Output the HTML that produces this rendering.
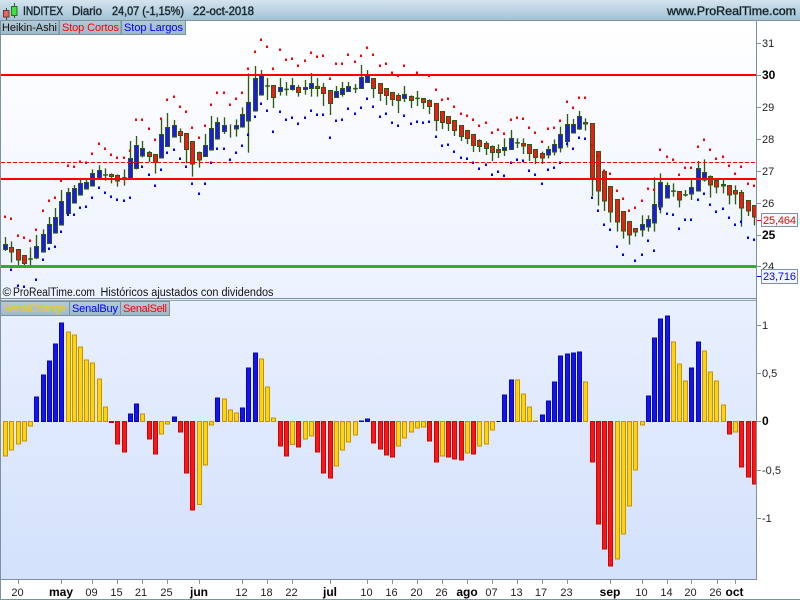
<!DOCTYPE html>
<html><head><meta charset="utf-8"><title>INDITEX</title>
<style>
html,body{margin:0;padding:0;background:#fff;width:800px;height:600px;overflow:hidden}
svg{display:block;font-family:"Liberation Sans",Arial,sans-serif;font-size:11px}
.w{fill:none;stroke:#2c5a12;stroke-width:4}
.d{fill:none;stroke:#2c5a12;stroke-width:4.5}
.cb{fill:#1a1aee;stroke:#2c5a12;stroke-width:3.2;shape-rendering:crispEdges}
.cr{fill:#f21a14;stroke:#2c5a12;stroke-width:3.2;shape-rendering:crispEdges}
.pr{fill:none;stroke:#f00;stroke-width:7}
.pb{fill:none;stroke:#00f;stroke-width:7}
.hy{fill:#ffd408;stroke:#c99200;stroke-width:3.3}
.hb{fill:#1414ee;stroke:#0808b0;stroke-width:3.3}
.hr{fill:#ff1414;stroke:#c80808;stroke-width:3.3}
.c{shape-rendering:crispEdges}
.hd{fill:#0c1a20;font-size:12px;paint-order:stroke;stroke:rgba(30,50,60,.4);stroke-width:1px}
.ax{fill:#222}
.b{font-weight:bold;fill:#000}
.m{text-anchor:middle}
</style></head><body>
<svg width="800" height="600" viewBox="0 0 800 600" xmlns="http://www.w3.org/2000/svg">
<defs>
<linearGradient id="h" x1="0" y1="0" x2="0" y2="1"><stop offset="0" stop-color="#d3e4ef"/><stop offset="1" stop-color="#a3c2d4"/></linearGradient>
<linearGradient id="l" x1="0" y1="0" x2="0" y2="1"><stop offset="0" stop-color="#b4cbd8"/><stop offset="1" stop-color="#9db9c8"/></linearGradient>
<linearGradient id="a" x1="0" y1="0" x2="0" y2="1"><stop offset="0" stop-color="#fff"/><stop offset="1" stop-color="#ecf2ff"/></linearGradient>
<linearGradient id="e" x1="0" y1="0" x2="0" y2="1"><stop offset="0" stop-color="#e9f0ff"/><stop offset="1" stop-color="#d3e1fb"/></linearGradient>
<clipPath id="k1"><rect x="1" y="21" width="755" height="277"/></clipPath>
<clipPath id="k2"><rect x="1" y="301" width="755" height="278"/></clipPath>
</defs>
<rect width="800" height="600" fill="#fff"/>
<rect width="800" height="20" fill="url(#h)"/>
<rect y="20" width="800" height="1" fill="#7c929e"/>
<rect x="1" y="21" width="755" height="277" fill="url(#a)"/>
<rect x="1" y="301" width="755" height="278" fill="url(#e)"/>
<rect y="298" width="756" height="1" fill="#7c929e"/>
<rect y="299" width="756" height="2" fill="#e4ebf2"/>
<rect y="300" width="756" height="1" fill="#8fa4b0"/>
<rect x="0" y="20" width="1" height="579" fill="#7c929e"/>
<rect x="756" y="20" width="1" height="560" fill="#7c929e"/>
<rect y="579" width="757" height="1" fill="#7c929e"/>
<rect y="599" width="800" height="1" fill="#7c929e"/>

<!-- logo -->
<g class="c">
<rect x="6" y="8" width="1" height="12" fill="#3a4a40"/><rect x="3.5" y="10.5" width="5.5" height="6.5" fill="#ef5f60" stroke="#6a3a3a"/>
<rect x="14" y="3" width="1" height="15" fill="#2f5a2f"/><rect x="11.5" y="6.5" width="5.5" height="9" fill="#3fe03f" stroke="#2a6a2a"/>
</g>
<text class="hd" x="23" y="15" textLength="40" lengthAdjust="spacingAndGlyphs">INDITEX</text>
<text class="hd" x="72" y="15" textLength="30" lengthAdjust="spacingAndGlyphs">Diario</text>
<text class="hd" x="112" y="15" textLength="72" lengthAdjust="spacingAndGlyphs">24,07 (-1,15%)</text>
<text class="hd" x="193" y="15" textLength="61" lengthAdjust="spacingAndGlyphs">22-oct-2018</text>
<text class="hd" x="667" y="15" textLength="129" lengthAdjust="spacingAndGlyphs">www.ProRealTime.com</text>

<g clip-path="url(#k1)">
<!-- Section A -->
<g transform="translate(.17,90) scale(.33333)">
<path class="w" d="M16 441V483M34 454V518M55 478V525M73 496V525M91 472V525M109 435V507M130 418V488M148 381V462M166 354V431M184 300V407M205 294V372M223 285V341M241 268V317M259 268V299M277 238V290M298 226V268M316 235V272M334 250V280M352 253V290M373 238V287M391 153V268"/>
<path class="cb" d="M10 464h12V478h-12zM103 470h12V504h-12zM124 434h12V486h-12zM142 404h12V460h-12zM160 383h12V429h-12zM178 335h12V405h-12zM199 308h12V370h-12zM217 296h12V339h-12zM235 281h12V315h-12zM253 278h12V297h-12zM271 251h12V288h-12zM292 242h12V264h-12zM385 206h12V267h-12z"/>
<path class="cr" d="M28 473h12V486h-12zM49 479h12V510h-12zM67 497h12V520h-12zM328 254h12V259h-12zM346 257h12V273h-12z"/>
<path class="d" d="M84 507h14M309 255h14M366 263.500h14"/>
<path class="pr c" d="M12 380h6M30 386h6M51 437h6M69 443h6M87 452h6M105 419h6M126 362h6M144 332h6M162 323h6M180 272h6M201 227h6M219 230h6M237 215h6M255 218h6M273 191h6M294 161h6M312 176h6M330 194h6M348 203h6M369 203h6M387 182h6"/>
<path class="pb c" d="M30 539h6M51 587h6M69 590h6M105 569h6M126 509h6M144 476h6M162 470h6M180 425h6M201 374h6M219 374h6M237 353h6M255 350h6M273 323h6M294 293h6M312 308h6M330 320h6M348 329h6M369 332h6M387 323h6"/>
</g>
<!-- Section B -->
<g transform="translate(135.17,30) scale(.33333)">
<path class="w" d="M4 318V418M22 333V382M43 363V396M61 373V431M79 265V385M97 249V350M118 270V323M136 295V338M154 310V400M172 333V440M193 365V413M211 312V380M229 258V362M247 262V329M268 262V312M286 283V323M304 268V320M322 232V293M340 130V368M361 108V245M379 120V197M397 144V210"/>
<path class="cb" d="M-2 347h12V415h-12zM16 356h12V378h-12zM73 314h12V384h-12zM91 293h12V349h-12zM112 287h12V321h-12zM205 347h12V379h-12zM223 296h12V360h-12zM241 278h12V327h-12zM262 287h12V304h-12zM298 287h12V297h-12zM316 254h12V291h-12zM334 218h12V273h-12zM355 146h12V243h-12zM373 135h12V195h-12z"/>
<path class="cr" d="M37 368h12V379h-12zM55 374h12V397h-12zM130 305h12V316h-12zM148 311h12V358h-12zM166 335h12V402h-12zM187 368h12V390h-12z"/>
<path class="d" d="M390 168h14"/>
<path class="pr c" d="M0 269h6M18 269h6M39 296h6M57 329h6M75 266h6M93 209h6M114 200h6M132 230h6M150 245h6M168 293h6M189 323h6M207 287h6M225 224h6M243 188h6M264 188h6M282 224h6M300 206h6M318 188h6M336 116h6M357 65h6M375 29h6M393 50h6"/>
<path class="pb c" d="M18 410h6M39 434h6M57 467h6M75 419h6M93 368h6M114 359h6M132 386h6M150 410h6M168 461h6M189 491h6M207 461h6M225 398h6M243 356h6M264 356h6M282 389h6M300 368h6M318 347h6M336 314h6M357 260h6M375 221h6M393 242h6"/>
</g>
<!-- Section C -->
<g transform="translate(270.17,30) scale(.33333)">
<path class="w" d="M10 165V234M31 144V197M49 156V197M67 144V182M85 165V200M106 150V194M124 129V200M142 144V200M160 159V228M181 181V255M199 168V204M217 156V200M235 156V185M256 162V189M274 105V177M292 120V158M310 145V204M331 160V213M349 175V225M367 186V228M385 190V249M403 168V216M424 196V234M442 183V228M460 205V237M478 208V252M499 220V303M517 244V297M535 259V303M553 271V318M574 286V333M592 301V342M610 313V366M628 328V366M649 334V375M667 346V393M685 343V384M703 325V378M724 300V360M742 325V354M760 325V372M778 343V393M796 358V402"/>
<path class="cb" d="M25 173h12V184h-12zM61 167h12V178h-12zM100 173h12V178h-12zM118 161h12V175h-12zM193 185h12V202h-12zM211 176h12V193h-12zM229 170h12V184h-12zM268 143h12V175h-12zM286 137h12V157h-12zM397 194h12V205h-12zM697 353h12V361h-12zM718 326h12V358h-12z"/>
<path class="cr" d="M4 167h12V202h-12zM79 173h12V187h-12zM136 170h12V175h-12zM154 173h12V190h-12zM175 182h12V220h-12zM304 146h12V175h-12zM325 161h12V190h-12zM343 176h12V196h-12zM361 188h12V208h-12zM379 197h12V211h-12zM418 200h12V211h-12zM454 206h12V217h-12zM472 212h12V229h-12zM493 221h12V271h-12zM511 245h12V277h-12zM529 260h12V280h-12zM547 272h12V301h-12zM568 287h12V319h-12zM586 302h12V325h-12zM604 314h12V346h-12zM622 332h12V349h-12zM643 341h12V355h-12zM661 350h12V367h-12zM679 359h12V367h-12zM754 341h12V348h-12zM772 344h12V370h-12zM790 359h12V382h-12z"/>
<path class="d" d="M42 178h14M249 176h14M435 205h14M735 338.500h14"/>
<path class="pr c" d="M6 116h6M27 59h6M45 89h6M63 86h6M81 107h6M102 92h6M120 68h6M138 80h6M156 77h6M177 146h6M195 101h6M213 101h6M231 74h6M252 95h6M270 77h6M288 53h6M306 74h6M327 107h6M345 101h6M363 128h6M381 137h6M399 107h6M438 128h6M474 137h6M495 179h6M513 209h6M531 206h6M549 230h6M570 251h6M588 257h6M606 269h6M624 287h6M645 278h6M663 308h6M681 299h6M699 311h6M720 269h6M738 263h6M756 266h6M774 293h6M792 308h6"/>
<path class="pb c" d="M6 305h6M27 245h6M45 269h6M63 263h6M81 281h6M102 263h6M120 242h6M138 254h6M156 254h6M177 323h6M195 272h6M213 269h6M231 236h6M252 251h6M270 233h6M288 206h6M306 230h6M327 260h6M345 251h6M363 278h6M381 287h6M399 257h6M420 281h6M438 275h6M456 278h6M474 275h6M495 320h6M513 347h6M531 344h6M549 365h6M570 383h6M588 386h6M606 398h6M624 416h6M645 404h6M663 434h6M681 425h6M699 437h6M720 398h6M738 389h6M756 392h6M774 422h6M792 434h6"/>
</g>
<!-- Section D -->
<g transform="translate(530.17,90) scale(.33333)">
<path class="w" d="M37 185V222M55 168V205M73 148V196M91 110V187M112 72V172M130 87V130M148 63V120M166 85V122M187 100V318M205 184V347M223 242V363M241 289V397M262 328V425M280 364V446M298 394V464M316 415V440M337 376V440M355 376V425M373 262V425M391 250V370M412 277V325M430 280V320M448 304V352M466 300V320M484 270V330M505 213V305M523 208V275M541 256V323M559 268V310M580 268V310M598 285V343M616 286V343M634 300V410M655 331V378M673 346V406"/>
<path class="cb" d="M49 179h12V195h-12zM67 164h12V186h-12zM85 134h12V174h-12zM106 104h12V154h-12zM124 104h12V129h-12zM142 80h12V117h-12zM331 404h12V420h-12zM349 389h12V411h-12zM367 344h12V399h-12zM385 278h12V351h-12zM406 287h12V324h-12zM478 293h12V312h-12zM499 236h12V303h-12zM517 248h12V270h-12z"/>
<path class="cr" d="M31 191h12V204h-12zM160 98h12V102h-12zM181 101h12V264h-12zM199 185h12V303h-12zM217 245h12V333h-12zM235 290h12V366h-12zM256 329h12V396h-12zM274 365h12V423h-12zM292 395h12V435h-12zM310 416h12V426h-12zM442 305h12V330h-12zM535 260h12V285h-12zM553 272h12V291h-12zM574 284h12V288h-12zM592 287h12V315h-12zM610 302h12V312h-12zM628 308h12V354h-12zM649 332h12V363h-12zM667 347h12V381h-12z"/>
<path class="d" d="M423 303.500h14M459 314.500h14"/>
<path class="pr c" d="M33 155h6M51 116h6M69 113h6M87 92h6M108 35h6M126 53h6M144 23h6M162 23h6M183 165h6M201 197h6M219 242h6M237 251h6M258 302h6M276 326h6M294 362h6M312 353h6M333 332h6M351 296h6M369 299h6M387 179h6M408 200h6M426 209h6M444 254h6M462 233h6M480 233h6M501 170h6M519 149h6M537 179h6M555 206h6M576 200h6M594 227h6M612 251h6M630 230h6M651 281h6M669 287h6"/>
<path class="pb c" d="M33 281h6M51 239h6M69 233h6M87 218h6M108 161h6M126 176h6M144 143h6M162 146h6M183 323h6M201 362h6M219 404h6M237 419h6M258 470h6M276 494h6M312 512h6M333 494h6M351 452h6M369 482h6M387 356h6M408 371h6M426 374h6M444 416h6M462 389h6M480 389h6M501 329h6M519 311h6M537 344h6M555 365h6M576 356h6M594 383h6M612 404h6M630 395h6M651 443h6M669 449h6"/>
</g>
<!-- lines -->
<rect x="1" y="74" width="755" height="2" fill="#f00" class="c"/>
<rect x="1" y="178" width="755" height="2" fill="#f00" class="c"/>
<path d="M1 162.500H756" stroke="#f00" stroke-width="1" stroke-dasharray="4 2" fill="none" class="c"/>
<rect x="1" y="265" width="755" height="3" fill="#33aa33" class="c"/>
</g>

<!-- Oscillator -->
<g clip-path="url(#k2)">
<g class="c" transform="translate(.17,310) scale(.33333)">
<path class="hy" d="M10 334h12V438h-12zM28 334h12V420h-12zM49 334h12V402h-12zM67 334h12V393h-12zM85 334h12V348h-12zM199 334h12V66h-12zM217 334h12V75h-12zM235 334h12V111h-12zM253 334h12V150h-12zM271 334h12V159h-12zM292 334h12V207h-12zM310 334h12V291h-12zM421 334h12V312h-12zM478 334h12V372h-12zM496 334h12V342h-12zM592 334h12V584h-12zM610 334h12V465h-12zM628 334h12V345h-12zM667 334h12V267h-12zM685 334h12V300h-12zM703 334h12V309h-12zM778 334h12V147h-12zM796 334h12V231h-12z"/>
<path class="hb" d="M103 334h12V261h-12zM124 334h12V195h-12zM142 334h12V153h-12zM160 334h12V102h-12zM178 334h12V39h-12zM385 334h12V312h-12zM403 334h12V282h-12zM517 334h12V321h-12zM646 334h12V264h-12zM721 334h12V294h-12zM739 334h12V174h-12zM760 334h12V129h-12z"/>
<path class="hr" d="M328 335h12V337h-12zM346 334h12V402h-12zM367 334h12V426h-12zM442 334h12V387h-12zM460 334h12V432h-12zM535 334h12V366h-12zM553 334h12V489h-12zM571 334h12V600h-12z"/>
</g>
<g class="c" transform="translate(270.17,310) scale(.33333)">
<path class="hy" d="M4 334h12V324h-12zM61 334h12V404h-12zM100 334h12V387h-12zM118 334h12V378h-12zM193 334h12V468h-12zM211 334h12V420h-12zM229 334h12V396h-12zM250 334h12V375h-12zM379 334h12V408h-12zM397 334h12V384h-12zM418 334h12V366h-12zM436 334h12V354h-12zM454 334h12V351h-12zM511 334h12V438h-12zM586 334h12V429h-12zM622 334h12V408h-12zM643 334h12V402h-12zM661 334h12V360h-12zM736 334h12V210h-12zM754 334h12V252h-12zM772 334h12V291h-12zM790 334h12V333h-12z"/>
<path class="hr" d="M25 334h12V408h-12zM43 334h12V438h-12zM79 334h12V411h-12zM136 334h12V426h-12zM154 334h12V489h-12zM175 334h12V504h-12zM304 334h12V399h-12zM325 334h12V417h-12zM343 334h12V435h-12zM361 334h12V441h-12zM472 334h12V393h-12zM493 334h12V456h-12zM529 334h12V441h-12zM547 334h12V447h-12zM568 334h12V450h-12zM604 334h12V432h-12z"/>
<path class="hb" d="M268 334h12V333h-12zM286 334h12V327h-12zM679 334h12V334h-12zM697 334h12V255h-12zM718 334h12V210h-12z"/>
</g>
<g class="c" transform="translate(530.17,310) scale(.33333)">
<path class="hy" d="M160 334h12V216h-12zM256 334h12V747h-12zM274 334h12V672h-12zM292 334h12V588h-12zM310 334h12V480h-12zM331 334h12V345h-12zM424 334h12V96h-12zM442 334h12V162h-12zM460 334h12V213h-12zM517 334h12V123h-12zM535 334h12V186h-12zM553 334h12V213h-12zM574 334h12V285h-12zM610 334h12V366h-12z"/>
<path class="hr" d="M181 334h12V456h-12zM199 334h12V642h-12zM217 334h12V717h-12zM235 334h12V768h-12zM592 334h12V372h-12zM628 334h12V471h-12zM649 334h12V501h-12zM667 334h12V522h-12z"/>
<path class="hb" d="M31 334h12V315h-12zM49 334h12V273h-12zM67 334h12V216h-12zM85 334h12V138h-12zM106 334h12V132h-12zM124 334h12V129h-12zM142 334h12V126h-12zM349 334h12V258h-12zM367 334h12V84h-12zM385 334h12V27h-12zM406 334h12V18h-12zM478 334h12V174h-12zM499 334h12V96h-12z"/>
</g>
</g>

<!-- Legends -->
<g class="c" fill="url(#l)" stroke="#7c929e">
<rect x=".5" y="20.500" width="58.500" height="14"/>
<rect x="59.500" y="20.500" width="61.500" height="14"/>
<rect x="121.500" y="20.500" width="64" height="14"/>
<rect x=".5" y="301.500" width="69" height="14"/>
<rect x="69.500" y="301.500" width="51" height="14"/>
<rect x="120.500" y="301.500" width="49" height="14"/>
</g>
<text x="2" y="31" fill="#111" textLength="55">Heikin-Ashi</text>
<text x="62" y="31" fill="#f00" textLength="57">Stop Cortos</text>
<text x="124" y="31" fill="#00f" textLength="59">Stop Largos</text>
<text x="3" y="312" fill="#ffc800" textLength="63">SenalChange</text>
<text x="72" y="312" fill="#00f" textLength="46">SenalBuy</text>
<text x="123" y="312" fill="#f00" textLength="44">SenalSell</text>
<text x="2.500" y="296" fill="#111" font-size="12">©</text>
<text x="13" y="296" fill="#111" font-size="11.500" textLength="82" lengthAdjust="spacingAndGlyphs">ProRealTime.com</text>
<text x="100.500" y="296" fill="#111" font-size="11.500" textLength="173" lengthAdjust="spacingAndGlyphs">Históricos ajustados con dividendos</text>

<!-- Right axis ticks -->
<path class="c" stroke="#7c929e" fill="none" d="M757 43.500h4M757 75.500h4M757 107.500h4M757 139.500h4M757 171.500h4M757 203.500h4M757 235.500h4M757 266.500h4M757 325.500h4M757 373.500h4M757 421.500h4M757 470.500h4M757 518.500h4"/>
<g class="ax">
<text x="762" y="47">31</text>
<text x="762" y="79" class="b" font-size="12">30</text>
<text x="762" y="111">29</text>
<text x="762" y="143">28</text>
<text x="762" y="175">27</text>
<text x="762" y="207">26</text>
<text x="762" y="239" class="b" font-size="12">25</text>
<text x="762" y="270">24</text>
<text x="762" y="329">1</text>
<text x="762" y="377">0,5</text>
<text x="762" y="425" class="b" font-size="12">0</text>
<text x="762" y="474">-0,5</text>
<text x="762" y="522">-1</text>
</g>
<path class="c" stroke="#f00" d="M757 220.500h4"/>
<path class="c" stroke="#00f" d="M757 276.500h4"/>
<rect x="761.500" y="213.500" width="36" height="13" fill="#f4f6ff" stroke="#7c929e" class="c"/>
<rect x="761.500" y="269.500" width="36" height="14" fill="#f4f6ff" stroke="#7c929e" class="c"/>
<text x="763" y="224" fill="#f00" textLength="33">25,464</text>
<text x="763" y="280" fill="#00f" textLength="33">23,716</text>

<!-- Bottom axis -->
<path class="c" stroke="#7c929e" fill="none" d="M18.500 580v4M61.500 580v4M92.500 580v4M117.500 580v4M142.500 580v4M167.500 580v4M199.500 580v4M242.500 580v4M267.500 580v4M292.500 580v4M330.500 580v4M367.500 580v4M392.500 580v4M417.500 580v4M442.500 580v4M467.500 580v4M492.500 580v4M517.500 580v4M542.500 580v4M567.500 580v4M610.500 580v4M642.500 580v4M667.500 580v4M691.500 580v4M717.500 580v4M735.500 580v4"/>
<g class="ax m">
<text x="17.500" y="596">20</text>
<text x="61" y="596" class="b" font-size="12">may</text>
<text x="91.500" y="596">09</text>
<text x="116.500" y="596">15</text>
<text x="141" y="596">21</text>
<text x="166.500" y="596">25</text>
<text x="199" y="596" class="b" font-size="12">jun</text>
<text x="241.500" y="596">12</text>
<text x="266.500" y="596">18</text>
<text x="291.500" y="596">22</text>
<text x="330" y="596" class="b" font-size="12">jul</text>
<text x="366.500" y="596">10</text>
<text x="391.500" y="596">16</text>
<text x="416.500" y="596">20</text>
<text x="441.500" y="596">26</text>
<text x="467" y="596" class="b" font-size="12">ago</text>
<text x="491.500" y="596">07</text>
<text x="516.500" y="596">13</text>
<text x="541" y="596">17</text>
<text x="566.500" y="596">23</text>
<text x="610" y="596" class="b" font-size="12">sep</text>
<text x="641.500" y="596">10</text>
<text x="666.500" y="596">14</text>
<text x="690.500" y="596">20</text>
<text x="715.500" y="596">26</text>
<text x="734.500" y="596" class="b" font-size="12">oct</text>
</g>
</svg>
</body></html>
